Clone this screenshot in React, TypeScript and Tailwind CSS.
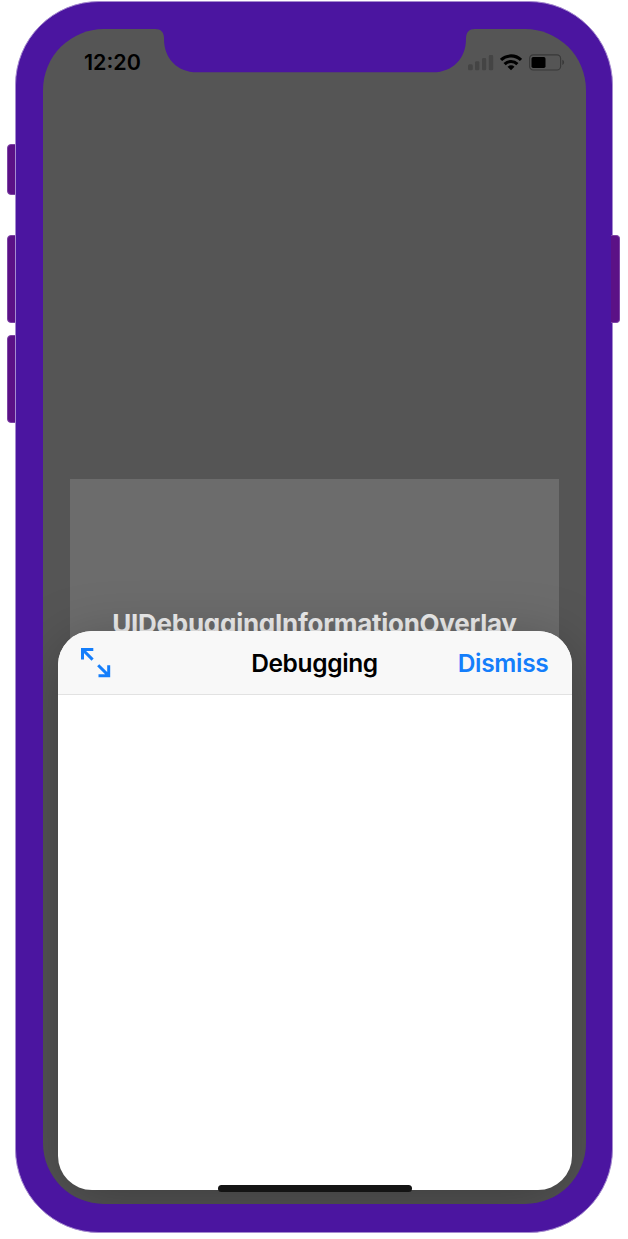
import React from "react";

function SideButton({ className }: { className: string }) {
  return <div className={`absolute border-[#7d43a4] bg-[#5b1186] ${className}`} />;
}

function Notch() {
  return (
    <svg className="absolute left-[110px] top-[-1px]" width="324" height="45" viewBox="0 0 324 45" fill="#4b15a0">
      <path d="M0 0H324V1H322C316 1 313 4 313 11C313 30 300 44.3 280 44.3H44C24 44.3 11 30 11 11C11 4 8 1 2 1H0Z" />
    </svg>
  );
}

function Signal() {
  return (
    <svg width="26" height="17" viewBox="0 0 26 17" fill="#444444">
      <rect x="0" y="10.3" width="4.8" height="6" rx="1.5" />
      <rect x="7" y="7.2" width="4.4" height="9.1" rx="1.4" />
      <rect x="14" y="4" width="4.2" height="12.3" rx="1.4" />
      <rect x="20.8" y="1" width="4.4" height="15.3" rx="1.4" />
    </svg>
  );
}

function Wifi() {
  return (
    <svg width="22" height="17" viewBox="0 0 22 17" fill="none" stroke="#000" strokeWidth="3.1">
      <path d="M1 6A14.3 14.3 0 0 1 21 6" />
      <path d="M4.6 10.1A9.1 9.1 0 0 1 17.4 10.1" />
      <path d="M11 16.2L7.5 12.8A5 5 0 0 1 14.5 12.8Z" fill="#000" stroke="none" />
    </svg>
  );
}

function Battery() {
  return (
    <svg width="36" height="17" viewBox="0 0 36 17">
      <rect x="0.6" y="0.8" width="31" height="15.2" rx="3.6" fill="none" stroke="#393939" strokeWidth="1.2" />
      <rect x="2.5" y="3" width="14" height="11" rx="1.7" />
      <path d="M33.3 5.8C35.7 6.8 35.7 10 33.3 11Z" fill="#393939" />
    </svg>
  );
}

function ResizeIcon() {
  return (
    <svg width="30" height="30" viewBox="0 0 30 30" fill="none" stroke="#147efb" strokeWidth="3">
      <path d="M12.3 1.5H1.5V11.5M1.8 1.8L11.6 11.6" />
      <path d="M17.5 27.7H27.7V17.2M27.4 27.4L17.2 17.2" />
    </svg>
  );
}

export default function App() {
  return (
    <main className="h-[1239px] w-[628px] overflow-hidden bg-white pl-[15px] pt-px font-['Inter','Liberation_Sans',sans-serif]">
      <div className="relative h-[1231.5px] w-[598px]">
        <SideButton className="left-[-8.5px] top-[143px] h-[51px] w-5 rounded-l-[4px] border" />
        <SideButton className="left-[-8.5px] top-[234px] h-[88px] w-5 rounded-l-[4px] border" />
        <SideButton className="left-[-8.5px] top-[334px] h-[88px] w-5 rounded-l-[4px] border" />

        <div className="relative h-full rounded-[84px] border border-[#a58acf] bg-[#4b15a0] pl-[27px] pt-[27px]">
          <div className="relative flex h-[1175px] w-[543px] flex-col overflow-hidden rounded-[61px] bg-[#555555]">
            <Notch />
            <header className="flex h-[66px] shrink-0 items-center justify-between pl-[41px] pr-[20px]">
              <time className="pt-[2px] text-[21.5px] font-semibold leading-none text-black">12:20</time>
              <div className="flex items-center gap-[7px]">
                <Signal />
                <span className="-ml-px mr-px"><Wifi /></span>
                <span className="-ml-px mr-px"><Battery /></span>
              </div>
            </header>

            <section className="mx-[27px] mt-[384px] h-[210px] shrink-0 bg-[#6c6c6c] pt-[129px] text-center">
              <h1 className="whitespace-nowrap text-[26px] font-bold leading-[32px] tracking-[-0.27px] text-[#eeeeee]">
                UIDebuggingInformationOverlay
              </h1>
            </section>

            <section className="relative ml-[14.5px] mt-[-58px] h-[558.5px] w-[514px] shrink-0 rounded-[34px] bg-white shadow-[0_12px_60px_rgba(0,0,0,0.28)]">
              <header className="grid h-[64px] grid-cols-[1fr_auto_1fr] items-center rounded-t-[34px] border-b border-[#e2e2e2] bg-[#f8f8f8] pl-[23px] pr-[23px]">
                <button aria-label="Resize"><ResizeIcon /></button>
                <h2 className="pt-px text-[24.5px] font-[560] leading-none tracking-[-0.35px] text-black">Debugging</h2>
                <button className="justify-self-end pt-px text-[24.5px] font-[560] leading-none tracking-[-0.3px] text-[#147efb]">Dismiss</button>
              </header>
            </section>
            <div className="absolute left-[175px] top-[1156px] h-[7px] w-[194px] rounded-full bg-[#141414]" />
          </div>
        </div>
        <SideButton className="right-[-7px] top-[234px] h-[88px] w-[9px] rounded-r-[4px] border border-l-0" />
      </div>
    </main>
  );
}
